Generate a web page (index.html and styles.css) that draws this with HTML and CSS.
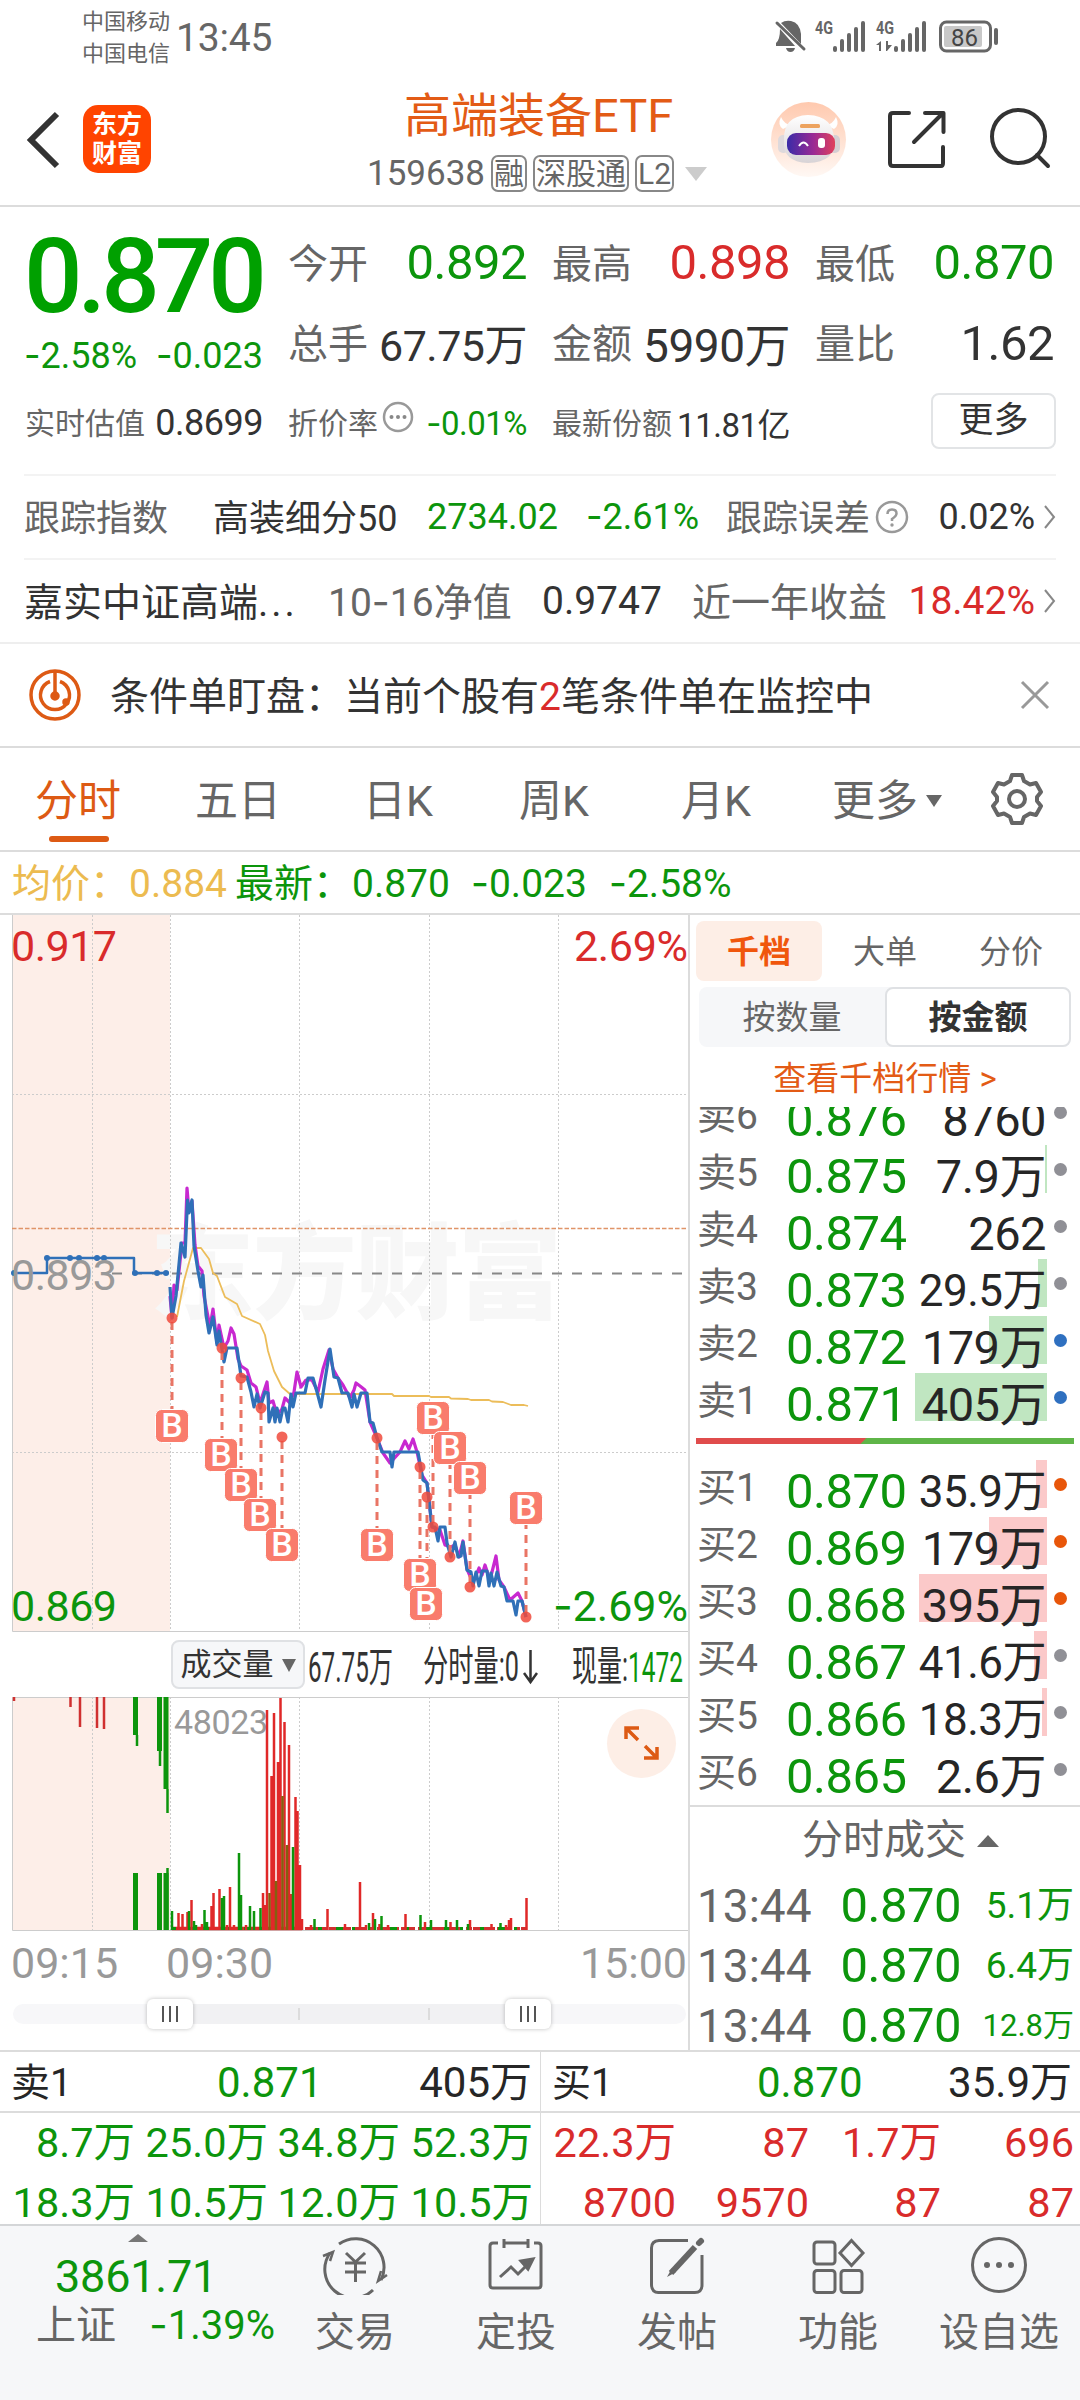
FILE: index.html
```html
<!DOCTYPE html>
<html lang="zh-CN">
<head>
	<meta charset="utf-8">
	<title>高端装备ETF 159638</title>
	<link rel="stylesheet" href="styles.css">
</head>
<body>

<!-- system status bar -->
<div class="statusbar">
	<div class="carrier"><span>中国移动</span><span>中国电信</span></div>
	<div class="clock">13:45</div>
	<svg class="sysicons" width="230" height="40" viewBox="770 16 230 40">
		<g fill="#666">
			<path d="M781 23 L801 44 V34 Q800 23 791 21 Q785 20 781 23Z"/>
			<path d="M780 29 L795 46 H776 V43 Q780 40 780 29Z"/>
			<path d="M786 48 h9 q-1 4 -4.500 4 q-3.500 0 -4.500 -4Z"/>
			<path d="M777 23 L804 49" stroke="#666" stroke-width="3" stroke-linecap="round"/>
			<rect x="833" y="46" width="4" height="6" rx="2"/><rect x="840" y="39" width="4" height="13" rx="2"/><rect x="847" y="33" width="4" height="19" rx="2"/><rect x="854" y="27" width="4" height="25" rx="2"/><rect x="861" y="21" width="4" height="31" rx="2"/>
			<rect x="894" y="46" width="4" height="6" rx="2"/><rect x="901" y="39" width="4" height="13" rx="2"/><rect x="908" y="33" width="4" height="19" rx="2"/><rect x="915" y="27" width="4" height="25" rx="2"/><rect x="922" y="21" width="4" height="31" rx="2"/>
			<path d="M881 41 v10 h-2 v-6 h-3Z M886 41 h2 v4 l4 0 l-5 6 h-1Z"/>
			<rect x="994" y="28" width="4" height="17" rx="2"/>
			<text x="815" y="34" font-size="18" font-weight="700" textLength="18" lengthAdjust="spacingAndGlyphs">4G</text>
			<text x="876" y="34" font-size="18" font-weight="700" textLength="18" lengthAdjust="spacingAndGlyphs">4G</text>
		</g>
		<rect x="940.500" y="22" width="50" height="29" rx="6" fill="none" stroke="#666" stroke-width="3"/>
		<rect x="944" y="26" width="38" height="21" rx="2" fill="#c8c8c8"/>
		<text x="964.500" y="45.500" font-size="24" fill="#444" text-anchor="middle">86</text>
	</svg>
</div>

<!-- title bar -->
<div class="header">
	<svg class="back" width="34" height="58" viewBox="0 0 34 58"><path d="M31 3 L5 29 L31 55" fill="none" stroke="#333" stroke-width="6"/></svg>
	<div class="logo"><span>东方</span><span>财富</span></div>
	<div class="title">
		<h1>高端装备ETF</h1>
		<div class="code"><span class="num">159638</span><i>融</i><i>深股通</i><i>L2</i><b class="down"></b></div>
	</div>
	<svg class="headicons" width="290" height="80" viewBox="765 100 290 80">
		<defs>
			<linearGradient id="bg" x1="0" y1="0" x2="0" y2="1"><stop offset="0" stop-color="#ffc9ae"/><stop offset="1" stop-color="#fff8f4"/></linearGradient>
			<linearGradient id="visor" x1="0" y1="0" x2="1" y2="0"><stop offset="0" stop-color="#3a2ba8"/><stop offset=".55" stop-color="#9a2a94"/><stop offset="1" stop-color="#e0405c"/></linearGradient>
			<linearGradient id="helmet" x1="0" y1="0" x2="0" y2="1"><stop offset="0" stop-color="#fff"/><stop offset="1" stop-color="#d8d3d6"/></linearGradient>
		</defs>
		<circle cx="808.500" cy="139.500" r="37.500" fill="url(#bg)"/>
		<path d="M781 117 q-4 8 2 12 l8 -4 q-7 -1 -10 -8Z M836 117 q4 8 -2 12 l-8 -4 q7 -1 10 -8Z" fill="#fff"/>
		<rect x="778" y="135" width="11" height="18" rx="5" fill="#ded9dc"/><rect x="829" y="135" width="11" height="18" rx="5" fill="#d5cfd3"/>
		<path d="M784 140 Q783 116 808 115 Q834 116 834 140 Q836 162 808 163 Q782 162 784 140Z" fill="url(#helmet)"/>
		<rect x="800" y="124" width="20" height="4" rx="1.500" fill="#eda35f"/>
		<rect x="787" y="133" width="48" height="22" rx="9" fill="url(#visor)"/>
		<path d="M799 146 q4.500 -7 9 0" stroke="#fff" stroke-width="2" fill="none"/><rect x="818" y="138" width="7" height="10" rx="3" fill="#fff"/>
		<g fill="none" stroke="#333" stroke-width="4" stroke-linecap="round" stroke-linejoin="round">
			<path d="M909 113 H893 Q890 113 890 116 V163 Q890 166 893 166 H941 Q943 166 943 163 V147"/>
			<path d="M925 113 H943.500 V132 M943 113 L914 142"/>
			<circle cx="1018.500" cy="136.500" r="26.500"/><path d="M1037 155 L1048 166"/>
		</g>
	</svg>
</div>

<!-- quote -->
<div class="quote">
	<div class="last">
		<div class="price">0.870</div>
		<div class="chg"><span><s>-</s>2.58%</span><span><s>-</s>0.023</span></div>
	</div>
	<div class="cell"><label>今开</label><span class="green">0.892</span></div>
	<div class="cell"><label>最高</label><span class="red">0.898</span></div>
	<div class="cell"><label>最低</label><span class="green">0.870</span></div>
	<div class="cell"><label>总手</label><span class="s44">67.75万</span></div>
	<div class="cell"><label>金额</label><span class="s47">5990万</span></div>
	<div class="cell"><label>量比</label><span>1.62</span></div>
	<div class="cell small"><label>实时估值</label><span>0.8699</span></div>
	<div class="cell small"><label>折价率<svg class="tip" width="32" height="32" viewBox="0 0 32 32"><circle cx="16" cy="16" r="14" fill="none" stroke="#999" stroke-width="2.500"/><circle cx="9.500" cy="16" r="2" fill="#888"/><circle cx="16" cy="16" r="2" fill="#888"/><circle cx="22.500" cy="16" r="2" fill="#888"/></svg></label><span class="green s33"><s>-</s>0.01%</span></div>
	<div class="cell small"><label>最新份额</label><span class="s33">11.81亿</span></div>
	<div class="cell end"><button class="more">更多</button></div>
</div>

<div class="inforow track">
	<span class="gray w189">跟踪指数</span><span class="w214">高装细分50</span><span class="green w159 n">2734.02</span><span class="green w140 n"><s>-</s>2.61%</span><span class="gray">跟踪误差</span>
	<svg class="ask" width="34" height="34" viewBox="0 0 34 34"><circle cx="17" cy="17" r="15" fill="none" stroke="#999" stroke-width="2.500"/><path d="M12.500 14 Q12.500 9.500 17 9.500 Q21.500 9.500 21.500 13.500 Q21.500 16 17 19 V21" fill="none" stroke="#999" stroke-width="2.500"/><circle cx="17" cy="25" r="1.700" fill="#999"/></svg>
	<span class="push n">0.02%</span>
	<svg class="arrow" width="13" height="26" viewBox="0 0 13 26"><path d="M2 2 L11 13 L2 24" fill="none" stroke="#888" stroke-width="2"/></svg>
</div>
<div class="inforow fund">
	<span class="w305">嘉实中证高端<small>...</small></span><span class="gray w213">10<s>-</s>16净值</span><span class="w149 n">0.9747</span><span class="gray">近一年收益</span>
	<span class="push red n">18.42%</span>
	<svg class="arrow" width="13" height="26" viewBox="0 0 13 26"><path d="M2 2 L11 13 L2 24" fill="none" stroke="#888" stroke-width="2"/></svg>
</div>

<div class="alert">
	<svg width="54" height="54" viewBox="0 0 54 54" fill="none" stroke="#dd5a14" stroke-width="3.500"><circle cx="27" cy="27" r="24"/><path d="M22 13.500 A14.500 14.500 0 1 0 32 13.500"/><path d="M27 3 V27"/><circle cx="27" cy="28" r="3" fill="#dd5a14"/><circle cx="38" cy="34" r="2" fill="#dd5a14"/></svg>
	<p>条件单盯盘：当前个股有<em>2</em>笔条件单在监控中</p>
	<svg width="30" height="30" viewBox="0 0 30 30"><path d="M2 2 L28 28 M28 2 L2 28" stroke="#999" stroke-width="3"/></svg>
</div>

<!-- period tabs -->
<div class="tabs">
	<span class="on">分时</span><span>五日</span><span>日K</span><span>周K</span><span>月K</span><span>更多<b class="down"></b></span>
	<svg width="56" height="56" viewBox="0 0 56 56" fill="none" stroke="#666" stroke-width="4" stroke-linejoin="round"><path d="M23 4 H33 L35 10 L41 13.500 L47 12 L52 21 L48 26 V30 L52 35 L47 44 L41 42.500 L35 46 L33 52 H23 L21 46 L15 42.500 L9 44 L4 35 L8 30 V26 L4 21 L9 12 L15 13.500 L21 10Z"/><circle cx="28" cy="28" r="8"/></svg>
</div>
<div class="avg"><span class="yellow">均价：<b>0.884</b></span><span class="green a1">最新：</span><span class="green a2">0.870</span><span class="green a3"><s>-</s>0.023</span><span class="green"><s>-</s>2.58%</span></div>

<div class="main">
	<div class="charts">
		<!-- price chart -->
		<svg class="pricechart" width="689" height="717" viewBox="0 915 689 717">
			<rect x="12" y="915" width="158" height="716" fill="#fdeee8"/>
			<text class="mark" x="150" y="1311" textLength="412">东方财富</text>
			<g class="grid">
				<path d="M92.500 915 V1631 M170.500 915 V1631 M299.500 915 V1631 M429.500 915 V1631 M558.500 915 V1631 M12 1094.500 H688 M12 1452.500 H688"/>
			</g>
			<path d="M12.500 915 V1631.500 H688" stroke="#ccc" fill="none"/>
			<path d="M12 1228.500 H688" stroke="#e09468" stroke-width="1.500" stroke-dasharray="4.500 2"/>
			<path d="M112 1273.500 H688" stroke="#888" stroke-width="2" stroke-dasharray="10 10"/>
			<g fill="none" stroke-linejoin="round">
				<path stroke="#2f70b8" stroke-width="2.500" d="M12 1273 H47 V1258 H134 V1273 H169"/>
				<path stroke="#ecbd5a" stroke-width="1.800" d="M177 1317 L184 1281 L193 1248 L201 1248 L209 1259 L213 1273 L217 1276 L225 1297 L237 1304 L242 1316 L260 1324 L265 1335 L268 1351 L274 1371 L282 1387 L290 1394 H392 L394 1396 H429 L431 1397 L449 1397 L451 1398.500 L468 1399 L471 1400 L489 1400 L492 1401.500 L503 1402 L511 1405 L524 1405 L528 1406"/>
				<path stroke="#c828d0" stroke-width="3.200" d="M170 1296 L172 1318 L174 1285 L177 1290 L182 1243 L185 1243 L187 1188 L189 1212 L192 1201 L195 1245 L198 1266 L202 1271 L204 1296 L210 1327 L213 1309 L217 1343 L219 1325 L224 1348 L228 1341 L231 1328 L234 1334 L238 1359 L241 1366 L247 1370 L251 1383 L256 1387 L260 1403 L267 1382 L269 1403 L273 1401 L277 1415 L282 1409 L285 1398 L290 1403 L294 1392 L297 1372 L301 1387 L306 1380 L312 1380 L318 1392 L323 1369 L329 1350 L333 1369 L338 1378 L343 1385 L350 1398 L354 1390 L356 1383 L360 1386 L365 1390 L370 1422 L377 1438 L383 1453 L390 1463 L400 1452 L405 1441 L409 1449 L413 1439 L417 1452 L422 1475 L427 1483 L432 1527 L440 1530 L445 1545 L451 1547 L455 1545 L459 1557 L463 1541 L467 1569 L473 1583 L479 1568 L482 1575 L485 1565 L490 1580 L496 1556 L499 1580 L504 1587 L510 1600 L518 1593 L522 1601 L526 1617"/>
				<path stroke="#2f70b8" stroke-width="3.200" d="M170 1287 L172 1318 L176 1296 L181 1243 L185 1257 L187.500 1200 L189 1213 L192 1200 L194 1246 L198 1271 L201 1287 L203 1275 L206 1315 L209 1333 L213 1317 L217 1345 L219 1331 L224 1362 L227 1348 H237 L241 1376 L247 1377 L251 1392 L254 1407 L257 1394 L260 1408 L265 1392 L268 1393 L269 1422 L273 1408 L275 1422 L277 1408 L280 1422 L283 1408 L285 1408 L288 1422 L291 1394 L293 1407 L296 1393 H305 L308 1378 H313 L317 1392 L321 1407 L325 1380 L330 1349 L334 1377 L338 1378 L342 1393 H348 L352 1407 L354 1394 L357 1407 L361 1393 H367 L370 1422 L373 1423 L377 1438 L382 1452 H390 L392 1467 L394 1452 H418 L423 1480 L427 1483 L432 1527 H435 L438 1541 L440 1527 H445 L447 1543 L451 1557 L455 1542 L458 1557 L461 1556 L463 1542 L467 1570 L471 1572 L473 1586 L476 1572 L479 1586 L482 1571 H487 L489 1586 L491 1573 L494 1586 L497 1572 L501 1586 L504 1587 L507 1601 H513 L516 1615 L518 1601 H522 L526 1617"/>
			</g>
			<g fill="#2f70b8"><circle cx="14" cy="1273" r="3"/><circle cx="47" cy="1258" r="3"/><circle cx="70" cy="1258" r="3"/><circle cx="79" cy="1258" r="3"/><circle cx="97" cy="1258" r="3"/><circle cx="104" cy="1258" r="3"/><circle cx="135" cy="1273" r="3"/><circle cx="157" cy="1273" r="3"/><circle cx="166" cy="1273" r="3"/></g>

			<!-- buy marks -->
			<path class="stem" d="M172 1322 V1410 M222 1352 V1439 M241 1382 V1469 M261 1412 V1499 M282 1441 V1529 M377 1442 V1529 M420 1471 V1558 M427 1501 V1588 M433 1523 V1434 M450 1553 V1464 M470 1583 V1494 M526 1613 V1524"/>
			<g fill="#f04a3c" fill-opacity=".85"><circle cx="172" cy="1318" r="5.500"/><circle cx="222" cy="1348" r="5.500"/><circle cx="241" cy="1378" r="5.500"/><circle cx="261" cy="1408" r="5.500"/><circle cx="282" cy="1437" r="5.500"/><circle cx="377" cy="1438" r="5.500"/><circle cx="420" cy="1467" r="5.500"/><circle cx="427" cy="1497" r="5.500"/><circle cx="433" cy="1527" r="5.500"/><circle cx="450" cy="1557" r="5.500"/><circle cx="470" cy="1587" r="5.500"/><circle cx="526" cy="1617" r="5.500"/></g>
			<g class="buy">
				<rect x="155.500" y="1409.500" width="33" height="33" rx="6"/><text x="172" y="1437">B</text>
				<rect x="204.500" y="1438.500" width="33" height="33" rx="6"/><text x="221" y="1466">B</text>
				<rect x="224.500" y="1468.500" width="33" height="33" rx="6"/><text x="241" y="1496">B</text>
				<rect x="243.500" y="1498.500" width="33" height="33" rx="6"/><text x="260" y="1526">B</text>
				<rect x="265.500" y="1528.500" width="33" height="33" rx="6"/><text x="282" y="1556">B</text>
				<rect x="360.500" y="1528.500" width="33" height="33" rx="6"/><text x="377" y="1556">B</text>
				<rect x="403.500" y="1558.500" width="33" height="33" rx="6"/><text x="420" y="1586">B</text>
				<rect x="409.500" y="1587.500" width="33" height="33" rx="6"/><text x="426" y="1615">B</text>
				<rect x="416.500" y="1401.500" width="33" height="33" rx="6"/><text x="433" y="1429">B</text>
				<rect x="433.500" y="1431.500" width="33" height="33" rx="6"/><text x="450" y="1459">B</text>
				<rect x="453.500" y="1461.500" width="33" height="33" rx="6"/><text x="470" y="1489">B</text>
				<rect x="509.500" y="1491.500" width="33" height="33" rx="6"/><text x="526" y="1519">B</text>
			</g>
			<g font-size="43">
				<text x="11" y="961" fill="#d92b2b" textLength="106">0.917</text>
				<text x="688" y="961" fill="#d92b2b" text-anchor="end" textLength="114">2.69%</text>
				<text x="11" y="1290" fill="#999" textLength="106">0.893</text>
				<text x="11" y="1621" fill="#0c950c" textLength="106">0.869</text>
				<text x="688" y="1621" fill="#0c950c" text-anchor="end"><tspan font-family="Inter">-</tspan>2.69%</text>
			</g>
		</svg>

		<div class="legend">
			<button>成交量<b class="down"></b></button>
			<svg width="383" height="65" viewBox="306 1632 383 65" font-size="42" fill="#333">
				<text x="309" y="1682" textLength="85" lengthAdjust="spacingAndGlyphs">67.75万</text>
				<text x="424" y="1681" textLength="96" lengthAdjust="spacingAndGlyphs">分时量:0</text>
				<path d="M531.500 1650 V1682 M525 1673 L531.500 1682 L538 1673" fill="none" stroke="#333" stroke-width="2.500"/>
				<text x="573" y="1681" textLength="56" lengthAdjust="spacingAndGlyphs">现量:</text>
				<text x="629" y="1682" textLength="55" lengthAdjust="spacingAndGlyphs" fill="#0c950c">1472</text>
			</svg>
		</div>

		<!-- volume chart -->
		<svg class="volume" width="689" height="235" viewBox="0 1697 689 235">
			<rect x="12" y="1697" width="158" height="233" fill="#fdeee8"/>
			<g class="grid"><path d="M92.500 1697 V1930 M170.500 1697 V1930 M299.500 1697 V1930 M429.500 1697 V1930 M558.500 1697 V1930"/></g>
			<path d="M688 1697.500 H12.500 V1930.500 H688" stroke="#ccc" fill="none"/>
			<text x="174" y="1734" font-size="34" fill="#999" textLength="94">48023</text>
			<g fill="none" stroke-width="2.500">
				<path stroke="#d03030" d="M14 1697 V1701 M70.500 1697 V1707 M80 1697 V1727 M97 1697 V1728 M104 1697 V1729"/>
				<path stroke="#0c950c" stroke-width="5" d="M135.500 1697 V1735 M159.500 1697 V1751 M166 1697 V1789 M135.500 1873 V1930 M159.500 1873 V1930 M166 1873 V1930"/>
				<path stroke="#0c950c" d="M137 1735 V1746 M160 1751 V1766 M167.500 1789 V1813 M167.500 1868 V1930"/>
				<path stroke="#e02828" stroke-width="3.500" d="M172 1928.500 H302"/>
				<path stroke="#d03030" stroke-width="3" stroke-dasharray="14 3 6 1 22 2" d="M305 1928.500 H527"/>
				<path stroke="#0c950c" stroke-width="3" stroke-dasharray="4 14 7 9 3 17" d="M172 1928.500 H262 M318 1928.500 H527"/>
				<path stroke="#e02828" d="M178.500 1913 V1930 M182.500 1914 V1930 M187.500 1912 V1930 M191.500 1900 V1930 M202 1924 V1930 M211.500 1906 V1930 M213.500 1893 V1930 M219.500 1889 V1930 M227 1925 V1930 M230 1887 V1930 M234 1925 V1930 M246 1925 V1930 M263 1893 V1930 M265 1905 V1930 M267 1710 V1930 M271.500 1776 V1930 M274 1713 V1930 M278 1762 V1930 M280.500 1698 V1930 M284.500 1722 V1930 M289 1745 V1930 M291 1894 V1930 M295.500 1797 V1930 M297.500 1811 V1930 M300 1865 V1930 M302 1919 V1930 M311 1925 V1930 M327.500 1909 V1930 M345 1924 V1930 M360 1882 V1930 M366 1925 V1930 M373 1913 V1930 M379.500 1924 V1930 M388 1925 V1930 M405.500 1914 V1930 M425 1922 V1930 M450.500 1922 V1930 M470 1920 V1930 M491.500 1924 V1930 M506 1925 V1930 M509 1920 V1930 M511 1918 V1930 M526.500 1898 V1930"/>
				<path stroke="#0c950c" d="M172 1911 V1930 M189 1911 V1930 M194 1921 V1930 M196 1925 V1930 M204.500 1910 V1930 M207 1922 V1930 M222 1898 V1930 M224 1896 V1930 M239 1853 V1930 M241 1895 V1930 M250 1906 V1930 M254 1911 V1930 M260.500 1908 V1930 M293 1847 V1930 M314.500 1919 V1930 M369 1923 V1930 M375 1919 V1930 M381.500 1916 V1930 M420.500 1915 V1930 M431 1920 V1930 M446 1920 V1930 M457 1920 V1930 M468 1924 V1930 M500.500 1923 V1930"/>
				<path stroke="#856010" d="M269.500 1893 V1930 M276 1881 V1930 M282.500 1796 V1930 M287 1845 V1930"/>
			</g>
			<circle cx="641.500" cy="1743.500" r="34.500" fill="#fdeee6"/>
			<path d="M626 1739 V1728 H639 M627 1729 L638 1740 M657 1747 V1758 H644 M656 1757 L645 1746" fill="none" stroke="#dd5a14" stroke-width="3.500"/>
		</svg>

		<div class="times"><span>09:15</span><span class="t2">09:30</span><span class="push">15:00</span></div>
		<div class="slider">
			<div class="range"><i></i><i></i></div>
			<div class="handle h1"></div><div class="handle h2"></div>
		</div>
	</div>

	<!-- order book -->
	<div class="side">
		<div class="sidetabs"><span class="on">千档</span><span>大单</span><span>分价</span></div>
		<div class="seg"><span>按数量</span><span class="on">按金额</span></div>
		<div class="link">查看千档行情 &gt;</div>
		<div class="book sell">
			<div class="row"><label>卖6</label><span class="p">0.876</span><span class="q">8760</span><i></i></div>
			<div class="row"><label>卖5</label><span class="p">0.875</span><span class="q"><u style="width:2px"></u>7.9万</span><i></i></div>
			<div class="row"><label>卖4</label><span class="p">0.874</span><span class="q">262</span><i></i></div>
			<div class="row"><label>卖3</label><span class="p">0.873</span><span class="q long"><u style="width:9px"></u>29.5万</span><i></i></div>
			<div class="row"><label>卖2</label><span class="p">0.872</span><span class="q"><u style="width:58px"></u>179万</span><i class="blue"></i></div>
			<div class="row"><label>卖1</label><span class="p">0.871</span><span class="q"><u style="width:132px"></u>405万</span><i class="blue"></i></div>
		</div>
		<div class="ratio"></div>
		<div class="book buybook">
			<div class="row"><label>买1</label><span class="p">0.870</span><span class="q long"><u style="width:11px"></u>35.9万</span><i class="orange"></i></div>
			<div class="row"><label>买2</label><span class="p">0.869</span><span class="q"><u style="width:58px"></u>179万</span><i class="orange"></i></div>
			<div class="row"><label>买3</label><span class="p">0.868</span><span class="q"><u style="width:128px"></u>395万</span><i class="orange"></i></div>
			<div class="row"><label>买4</label><span class="p">0.867</span><span class="q long"><u style="width:13px"></u>41.6万</span><i></i></div>
			<div class="row"><label>买5</label><span class="p">0.866</span><span class="q long"><u style="width:5px"></u>18.3万</span><i></i></div>
			<div class="row"><label>买6</label><span class="p">0.865</span><span class="q">2.6万</span><i></i></div>
		</div>
		<div class="deals">
			<h3>分时成交<b></b></h3>
			<div class="deal"><span>13:44</span><span class="p">0.870</span><span class="v">5.1万</span></div>
			<div class="deal"><span>13:44</span><span class="p">0.870</span><span class="v">6.4万</span></div>
			<div class="deal"><span>13:44</span><span class="p">0.870</span><span class="v v30">12.8万</span></div>
		</div>
	</div>
</div>

<!-- level 2 queue -->
<div class="queue">
	<div class="half">
		<div class="qhead"><span>卖1</span><span class="green">0.871</span><span>405万</span></div>
		<div class="qgrid green">
			<span>8.7万</span><span>25.0万</span><span>34.8万</span><span>52.3万</span>
			<span>18.3万</span><span>10.5万</span><span>12.0万</span><span>10.5万</span>
		</div>
	</div>
	<div class="half">
		<div class="qhead"><span>买1</span><span class="green">0.870</span><span>35.9万</span></div>
		<div class="qgrid red">
			<span>22.3万</span><span>87</span><span>1.7万</span><span>696</span>
			<span>8700</span><span>9570</span><span>87</span><span>87</span>
		</div>
	</div>
</div>

<!-- bottom bar -->
<div class="nav">
	<div class="index">
		<b></b>
		<div class="pt">3861.71</div>
		<div class="nm"><span>上证</span><span class="green"><s>-</s>1.39%</span></div>
	</div>
	<div class="item">
		<svg width="66" height="60" viewBox="322 2234 66 60"><path d="M339 2243 A28.500 28.500 0 0 1 381 2279 M373 2289 A28.500 28.500 0 0 1 330 2252"/><path d="M323 2255 L333 2251 L330 2260 M387 2274 L378 2280 L381 2270" stroke-width="2.500"/><path d="M346 2252 L355.500 2261 L365 2252 M355.500 2261 V2281 M345 2262 H366 M345 2271 H366"/></svg>
		<span>交易</span>
	</div>
	<div class="item">
		<svg width="66" height="60" viewBox="483 2234 66 60"><path d="M498 2242 H493 Q490 2242 490 2245 V2284 Q490 2287 493 2287 H538 Q541 2287 541 2284 V2245 Q541 2242 538 2242 H534 M504 2238 V2247 M528 2238 V2247 M504 2242 H528"/><path d="M500 2276 L511 2266 L518 2273 L529 2262"/><path d="M521 2260 L533 2258 L528 2268Z" fill="#666"/></svg>
		<span>定投</span>
	</div>
	<div class="item">
		<svg width="66" height="60" viewBox="644 2234 66 60"><path d="M688 2239.500 H659 Q651.500 2240 651.500 2247 V2284 Q652 2292 659 2291.500 H694 Q702 2292 702 2284 V2254"/><path d="M695 2246 L671 2272" stroke-width="6"/><path d="M672 2267 L667 2276 L676 2271Z" fill="#666" stroke="none"/><path d="M699 2242 L701 2240" stroke-width="6" stroke-linecap="round"/></svg>
		<span>发帖</span>
	</div>
	<div class="item">
		<svg width="66" height="60" viewBox="805 2234 66 60"><rect x="814" y="2241" width="21" height="22" rx="3"/><rect x="814" y="2269.500" width="21" height="22" rx="3"/><rect x="841" y="2269.500" width="21" height="22" rx="3"/><path d="M851.500 2239.500 L863 2252 L851.500 2264.500 L840 2252Z"/></svg>
		<span>功能</span>
	</div>
	<div class="item">
		<svg width="66" height="60" viewBox="966 2234 66 60"><circle cx="999" cy="2264" r="26.500"/><g fill="#666" stroke="none"><circle cx="987" cy="2264" r="3"/><circle cx="999" cy="2264" r="3"/><circle cx="1011" cy="2264" r="3"/></g></svg>
		<span>设自选</span>
	</div>
</div>

</body>
</html>
```
FILE: styles.css
```css
* { box-sizing: border-box; }
body {
	margin: 0;
	width: 1080px;
	height: 2400px;
	overflow: hidden;
	background: #fff;
	color: #333;
	font-family: Roboto, "Noto Sans CJK SC", sans-serif;
}
svg { display: block; flex: none; }
i, em { font-style: normal; }
u, s { text-decoration: none; }
s { font-family: Inter, sans-serif; line-height: 1px; }
span { white-space: nowrap; }
button { font-family: inherit; color: #333; padding: 0; }
.green { color: #0c950c; }
.red { color: #d92b2b; }
.yellow { color: #ecbb50; }
.gray { color: #666; }
.push { margin-left: auto; }
b.down {
	display: inline-block;
	border: 8px solid transparent;
	border-top: 12px solid #666;
	border-bottom: none;
}

/* status bar */
.statusbar { display: flex; height: 76px; padding-left: 82px; color: #666; }
.carrier { width: 94px; padding-top: 6px; font-size: 22px; line-height: 32px; }
.carrier span { display: block; }
.clock { font-size: 39px; line-height: 77px; letter-spacing: -.2px; }
.sysicons { margin: 16px 80px 0 auto; }

/* title bar */
.header {
	display: flex;
	height: 131px;
	padding-left: 26px;
	border-bottom: 2px solid #dcdcdc;
}
.back { margin-top: 35px; }
.logo {
	width: 68px;
	height: 68px;
	margin: 29px 0 0 23px;
	padding-top: 5px;
	border-radius: 15px;
	background: #ff4400;
	color: #fff;
	font-size: 25px;
	font-weight: 700;
	line-height: 29px;
	text-align: center;
}
.logo span { display: block; }
.title { width: 614px; }
.title h1 {
	margin: 10px 0 0;
	padding-left: 253px;
	color: #e35b15;
	font-size: 47px;
	font-weight: 400;
	line-height: 60px;
}
.code { display: flex; align-items: center; margin-left: 216px; height: 55px; font-size: 35px; color: #666; }
.code .num { width: 124px; }
.code i {
	height: 37px;
	margin-right: 6px;
	padding: 0 1px;
	border: 2px solid #888;
	border-radius: 7px;
	font-size: 30px;
	line-height: 33px;
}
.code b.down { margin-left: 5px; border-width: 14px 11px 0; border-top-color: #ccc; }
.headicons { margin-top: 24px; }

/* quote */
.quote {
	display: grid;
	grid-template-columns: 237px 238px 237px 238px;
	grid-template-rows: 81px 80px 80px;
	column-gap: 26px;
	height: 267px;
	padding: 15px 0 0 26px;
}
.last { grid-row: span 2; color: #00a000; }
.price { margin-left: -2px; font-size: 103px; font-weight: 500; line-height: 110px; height: 107px; letter-spacing: -5px; }
.chg { display: flex; justify-content: space-between; margin-left: -2px; font-size: 36px; line-height: 54px; color: #0c950c; }
.cell { display: flex; justify-content: space-between; align-items: center; font-size: 49px; letter-spacing: -.5px; }
.cell label { margin: -4px 0 0 -1px; color: #666; font-size: 40px; letter-spacing: 0; }
.cell .s44 { font-size: 43px; margin-top: -3px; }
.cell .s47 { font-size: 46px; margin-top: -3px; }
.cell.small { font-size: 36px; }
.cell.small label { display: flex; font-size: 30px; }
.cell .s33 { font-size: 33px; }
.tip { margin: 2px 0 0 4px; }
.end { justify-content: flex-end; }
.more {
	width: 125px;
	height: 56px;
	margin: -4px -2px 0 0;
	border: 2px solid #e2e4e6;
	border-radius: 8px;
	background: #fff;
	font-size: 35px;
	line-height: 48px;
}

.inforow {
	display: flex;
	align-items: center;
	height: 84px;
	margin: 0 24px;
	border-top: 2px solid #f3f3f3;
	font-size: 36px;
}
.inforow span { margin-top: -4px; }
.inforow .n { margin-top: 0; }
.inforow small { font-size: 39px; letter-spacing: 3px; }
.fund { font-size: 39px; }
.w189 { width: 189px; }
.w214 { width: 214px; }
.w159 { width: 159px; }
.w140 { width: 140px; }
.w305 { width: 304px; }
.w213 { width: 214px; }
.w149 { width: 150px; }
.ask { margin-left: 5px; }
.arrow { margin-left: 8px; }

.alert {
	display: flex;
	align-items: center;
	height: 106px;
	padding: 0 30px 0 28px;
	border-top: 2px solid #eee;
	border-bottom: 2px solid #dcdcdc;
}
.alert p { flex: 1; margin: -4px 0 0 28px; font-size: 39px; }
.alert em { color: #d92b2b; }

/* tabs */
.tabs {
	display: grid;
	grid-template-columns: 160px 168px 156px 162px 151px 157px 60px;
	align-items: center;
	height: 104px;
	padding-left: 35px;
	border-bottom: 2px solid #dcdcdc;
	font-size: 43px;
	color: #666;
}
.tabs span { line-height: 107px; height: 102px; }
.tabs .on { position: relative; color: #dd5a14; }
.tabs .on:after {
	content: "";
	position: absolute;
	left: 14px;
	bottom: 8px;
	width: 60px;
	height: 6px;
	border-radius: 3px;
	background: #dd5a14;
}
.tabs b.down { margin: 0 0 9px 8px; }
.avg {
	display: flex;
	height: 63px;
	padding-left: 12px;
	border-bottom: 2px solid #dcdcdc;
	font-size: 39px;
	line-height: 64px;
}
.avg b { font-weight: 400; }
.avg .yellow { width: 223px; }
.avg .a1 { width: 117px; }
.avg .a2 { width: 119px; }
.avg .a3 { width: 138px; }

/* charts */
.main { display: flex; height: 1137px; border-bottom: 2px solid #dcdcdc; }
.charts { width: 690px; border-right: 2px solid #dcdcdc; }
.grid path { fill: none; stroke: #ccc; stroke-dasharray: 2 2; }
.mark { fill: #f7f7f7; font-size: 104px; font-weight: 900; }
.stem { fill: none; stroke: #e97565; stroke-width: 3; stroke-dasharray: 8 6; }
.buy rect { fill: #f97c6c; stroke: #fff; }
.buy text { fill: #fff; font-size: 34px; font-weight: 500; text-anchor: middle; }
.legend { display: flex; height: 65px; padding-left: 171px; }
.legend button {
	width: 135px;
	height: 49px;
	margin-top: 8px;
	border: 2px solid #dfe1e4;
	border-radius: 8px;
	background: #f6f7f9;
	font-size: 31px;
	line-height: 42px;
}
.legend b.down { border-width: 13px 7px 0; margin: 0 0 3px 8px; }
.times { display: flex; height: 72px; padding: 0 1px 0 11px; color: #999; font-size: 43px; line-height: 63px; }
.times .t2 { margin-left: 48px; }
.slider { position: relative; height: 20px; margin: 0 2px 0 13px; border-radius: 10px; background: #f7f7f9; }
.range { display: flex; width: 358px; height: 20px; margin-left: 157px; background: #f1f1f3; }
.range i { width: 130px; height: 12px; margin-top: 4px; border-right: 2px solid #dcdcdc; }
.handle {
	position: absolute;
	top: -5px;
	width: 46px;
	height: 30px;
	border-radius: 6px;
	box-shadow: 0 0 4px rgba(0,0,0,.25);
	background: linear-gradient(90deg, #555 2px, transparent 2px) 15px 7px / 7px 16px no-repeat, linear-gradient(90deg, #555 2px, transparent 2px) 22px 7px / 7px 16px no-repeat, linear-gradient(90deg, #555 2px, transparent 2px) 29px 7px / 7px 16px no-repeat, #fff;
}
.h1 { left: 134px; }
.h2 { left: 492px; }

/* order book */
.side { width: 390px; padding-top: 6px; overflow: hidden; }
.sidetabs { display: flex; height: 60px; margin-left: 6px; font-size: 32px; line-height: 62px; text-align: center; color: #666; }
.sidetabs span { width: 126px; }
.sidetabs .on { border-radius: 8px; background: #fdeee6; color: #f0560c; font-weight: 700; }
.seg {
	display: flex;
	width: 372px;
	height: 60px;
	margin: 6px 0 0 9px;
	border-radius: 8px;
	background: #f6f7f9;
	font-size: 33px;
	line-height: 62px;
	text-align: center;
	color: #666;
}
.seg span { width: 186px; }
.seg .on { border: 2px solid #dfe1e4; border-radius: 8px; background: #fff; color: #333; font-weight: 700; line-height: 58px; }
.link { height: 60px; font-size: 33px; line-height: 64px; text-align: center; color: #e35b15; }
.sell { height: 323px; overflow: hidden; }
.sell .row:first-child { margin-top: -19px; }
.row {
	display: grid;
	grid-template-columns: 89px 119px 142px 28px;
	height: 57px;
	padding-left: 7px;
	line-height: 64px;
}
.row label { font-size: 39px; line-height: 56px; color: #666; white-space: nowrap; }
.p { font-size: 49px; color: #0c950c; letter-spacing: -.5px; }
.q { position: relative; z-index: 0; font-size: 47px; text-align: right; color: #262626; padding-right: 1px; letter-spacing: -.5px; }
.q.long { font-size: 44px; }
.q u { position: absolute; z-index: -1; top: 0; right: 0; height: 48px; background: #c0e6c1; }
.buybook u { background: #fbc9c9; }
.row i { width: 13px; height: 13px; margin: 18px 0 0 7px; border-radius: 50%; background: #909096; }
.row i.blue { background: #2f70c0; }
.row i.orange { background: #e8560a; }
.ratio {
	height: 6px;
	margin: 8px 6px 16px;
	background: linear-gradient(135deg, #e04c4c 120px, #5fb548 121px);
}
.deals { margin-top: 3px; border-top: 2px solid #dcdcdc; }
.deals h3 { margin: 0; padding-left: 112px; height: 68px; font-size: 41px; font-weight: 400; line-height: 66px; color: #666; }
.deals h3 b { display: inline-block; margin: 0 0 7px 11px; border: 11px solid transparent; border-top: none; border-bottom: 12px solid #666; }
.deal { display: flex; height: 60px; padding: 0 6px 0 7px; line-height: 62px; font-size: 46px; color: #666; }
.deal .p { margin-left: 29px; }
.deal .v { margin-left: auto; font-size: 37px; color: #0c950c; }
.deal .v30 { font-size: 31px; }

/* queue */
.queue { display: flex; height: 174px; border-bottom: 2px solid #d4d6d8; }
.half { width: 541px; border-right: 1px solid #dcdcdc; font-size: 42px; }
.half + .half { width: 539px; border: none; }
.qhead { display: grid; grid-template-columns: 206px 120px 1fr; height: 61px; padding: 0 8px 0 11px; line-height: 62px; border-bottom: 2px solid #dcdcdc; color: #262626; }
.half + .half .qhead { grid-template-columns: 205px 120px 1fr; }
.qhead span:first-child { font-size: 39px; }
.qhead span:last-child { text-align: right; }
.qgrid { display: grid; grid-template-columns: 135px 133px 132px 133px; line-height: 60px; text-align: right; font-size: 41.500px; height: 111px; overflow: hidden; }

/* bottom bar */
.nav { display: flex; height: 176px; background: #f6f7f9; color: #666; }
.index { width: 275px; }
.index > b { display: block; width: 20px; margin: 8px 0 0 128px; border: 10px solid transparent; border-top: none; border-bottom: 8px solid #777; }
.pt { margin: 9px 0 0 55px; font-size: 45px; line-height: 52px; letter-spacing: -.2px; color: #0c950c; }
.nm { display: flex; justify-content: space-between; padding-left: 36px; font-size: 40px; line-height: 46px; }
.item { width: 161px; padding-top: 9px; text-align: center; font-size: 40px; }
.item svg { margin: 0 auto; fill: none; stroke: #666; stroke-width: 3; }
.item span { display: block; line-height: 76px; }
.item, .item svg { position: relative; left: -.5px; }
```
